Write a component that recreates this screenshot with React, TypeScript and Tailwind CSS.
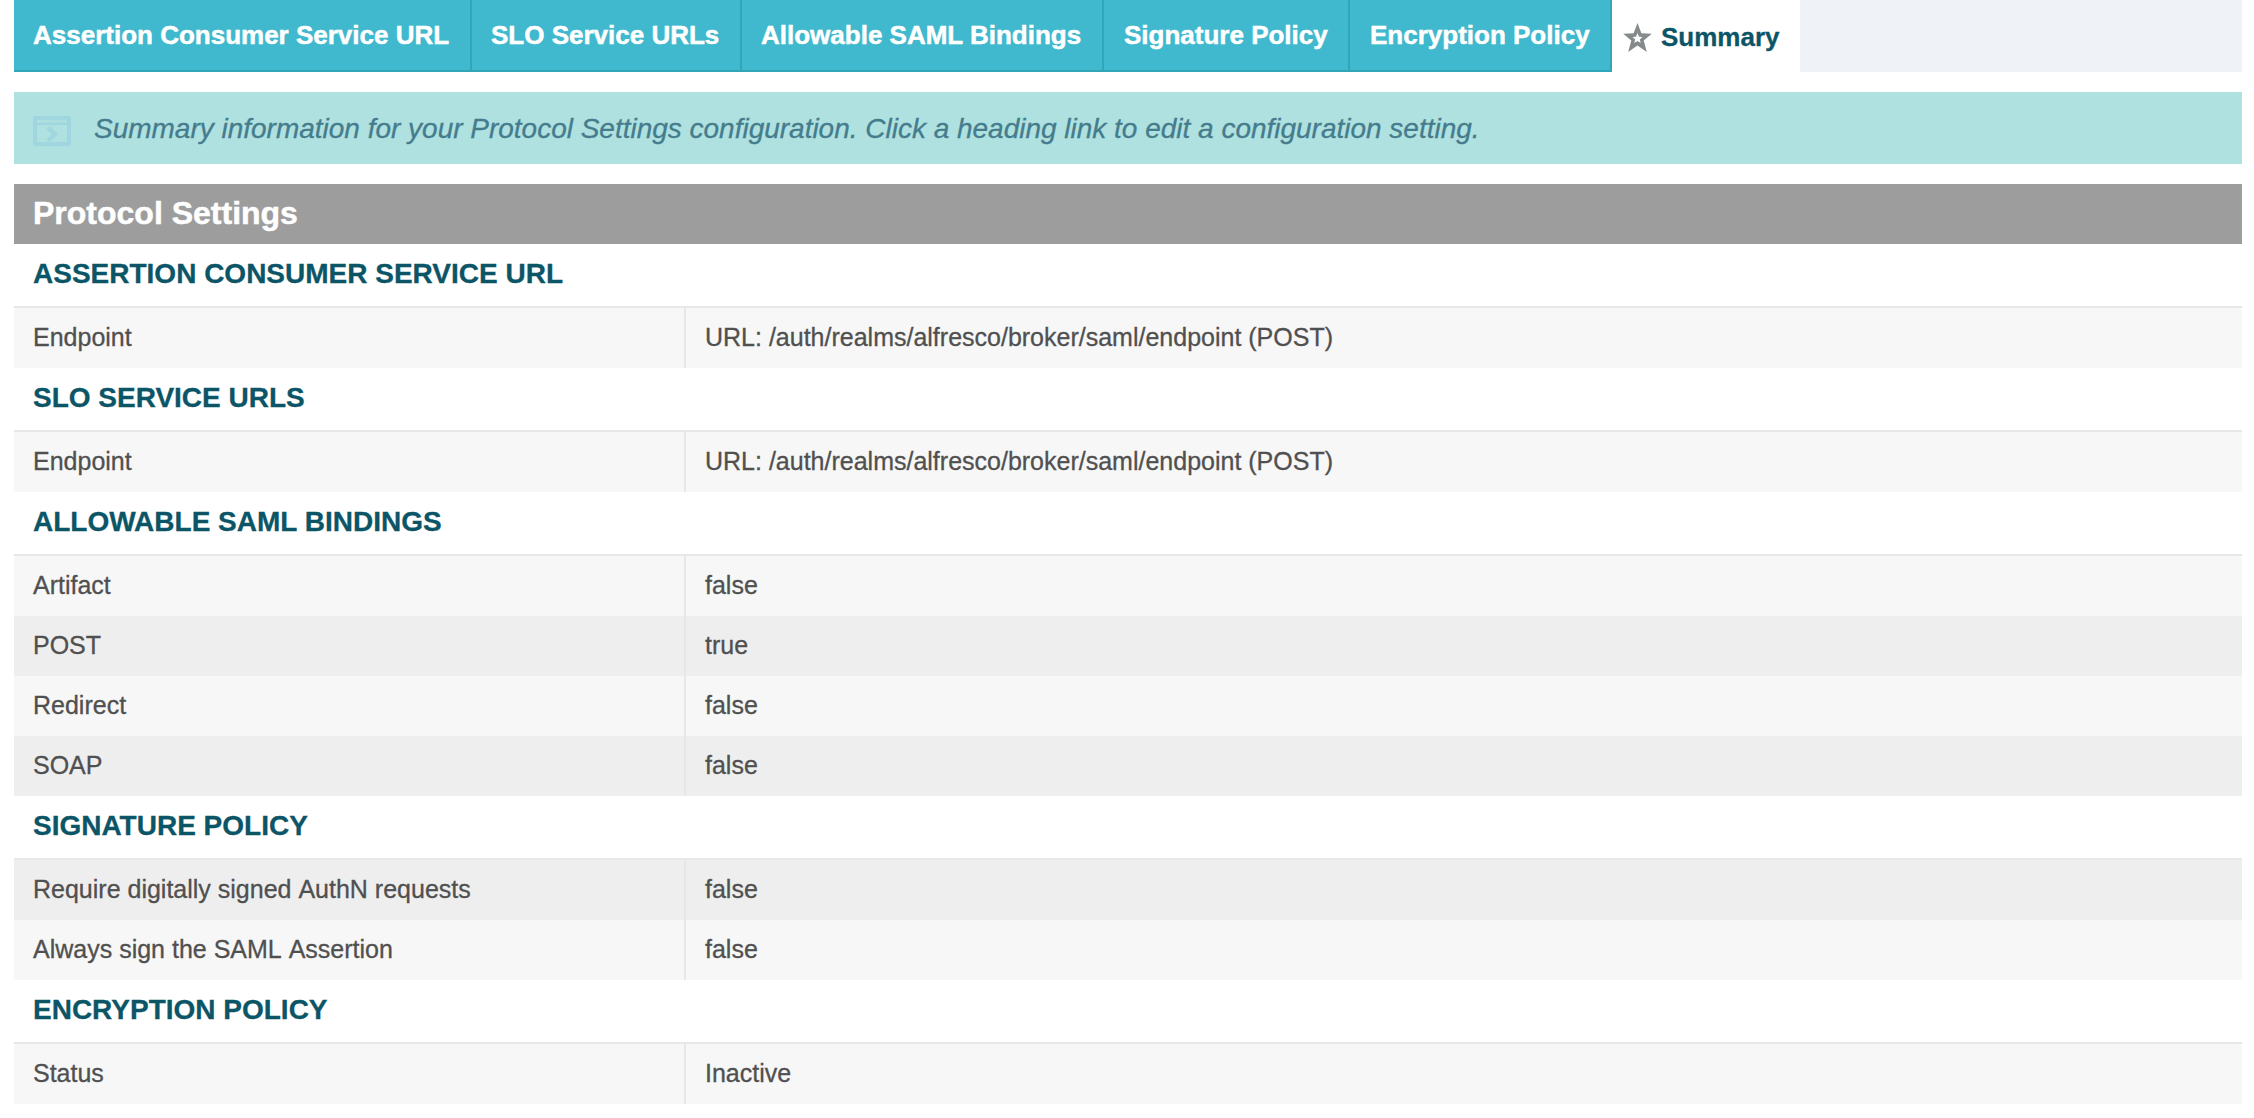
const tabs = [
  { label: 'Assertion Consumer Service URL', width: 'w-[458px]', pad: 'pl-[19px]' },
  { label: 'SLO Service URLs', width: 'w-[270px]', pad: 'pl-[19px]' },
  { label: 'Allowable SAML Bindings', width: 'w-[362px]', pad: 'pl-[19px]' },
  { label: 'Signature Policy', width: 'w-[246px]', pad: 'pl-5' },
  { label: 'Encryption Policy', width: 'w-[262px]', pad: 'pl-5' },
];

type Row = { name: string; value: string; dark?: boolean };

const sections: { title: string; rows: Row[] }[] = [
  {
    title: 'ASSERTION CONSUMER SERVICE URL',
    rows: [{ name: 'Endpoint', value: 'URL: /auth/realms/alfresco/broker/saml/endpoint (POST)' }],
  },
  {
    title: 'SLO SERVICE URLS',
    rows: [{ name: 'Endpoint', value: 'URL: /auth/realms/alfresco/broker/saml/endpoint (POST)' }],
  },
  {
    title: 'ALLOWABLE SAML BINDINGS',
    rows: [
      { name: 'Artifact', value: 'false' },
      { name: 'POST', value: 'true', dark: true },
      { name: 'Redirect', value: 'false' },
      { name: 'SOAP', value: 'false', dark: true },
    ],
  },
  {
    title: 'SIGNATURE POLICY',
    rows: [
      { name: 'Require digitally signed AuthN requests', value: 'false', dark: true },
      { name: 'Always sign the SAML Assertion', value: 'false' },
    ],
  },
  { title: 'ENCRYPTION POLICY', rows: [{ name: 'Status', value: 'Inactive' }] },
];

function StarIcon() {
  return (
    <svg className="h-[30px] w-[29px]" viewBox="0 0 29 30">
      <path
        fillRule="evenodd"
        fill="#858b8b"
        d="M14.5 1L18.4 11.2L28.8 11.7L20.7 18.4L23.8 30L14.5 23.6L5.2 30L8.3 18.4L0.2 11.7L10.6 11.2Z M14.5 11L13 14.8L9.6 15.1L12.2 17.4L11.3 21L14.5 19L17.7 21L16.8 17.4L19.4 15.1L16 14.8Z"
      />
    </svg>
  );
}

function WindowIcon() {
  return (
    <svg className="mt-[6px] h-[30px] w-[38px]" viewBox="0 0 38 30" fill="none">
      <rect x="2" y="2" width="34" height="26" rx="0.5" stroke="#9fd6df" strokeWidth="4" />
      <path d="M3 7.8H35" stroke="#9fd6df" strokeWidth="2.4" />
      <path d="M4 5H6M7.5 5H9.5M12 5H34" stroke="#abdfe0" strokeWidth="2.4" />
      <path d="M15 11.5L22 18L15 24.8" stroke="#9fd6df" strokeWidth="4.2" />
    </svg>
  );
}

export default function App() {
  return (
    <div className="h-[1118px] w-[2254px] overflow-hidden bg-white pr-3 pl-3.5 font-['Liberation_Sans',Arial,sans-serif] whitespace-nowrap">
      <nav className="flex h-[72px] bg-[#eff3f8]">
        {tabs.map((t) => (
          <div
            key={t.label}
            className={`${t.width} ${t.pad} h-full shrink-0 border-r-2 border-b-2 border-[#31a6b8] bg-[#40b8cd] pt-[15px] text-[26px] leading-[40px] font-bold text-white [-webkit-text-stroke:0.5px_white]`}
          >
            {t.label}
          </div>
        ))}
        <div className="flex h-full w-[188px] shrink-0 bg-white pt-[22px] pl-[11px]">
          <StarIcon />
          <span className="-mt-[5px] ml-[9px] text-[26px] leading-[40px] font-bold text-[#0b5567] [-webkit-text-stroke:0.3px_#0b5567]">
            Summary
          </span>
        </div>
      </nav>
      <div className="mt-5 flex h-[72px] bg-[#aee1df] pt-[18px] pl-[19px]">
        <WindowIcon />
        <p className="-mt-px ml-[23px] text-[28px] leading-[40px] tracking-[-0.01px] text-[#457c8d] italic [-webkit-text-stroke:0.3px_#457c8d]">
          Summary information for your Protocol Settings configuration. Click a heading link to edit a configuration setting.
        </p>
      </div>
      <h1 className="mt-5 h-[60px] bg-[#9d9d9d] pl-[19px] text-[32px] leading-[58px] font-bold text-white [-webkit-text-stroke:0.5px_white]">
        Protocol Settings
      </h1>
      {sections.map((s) => (
        <section key={s.title}>
          <h2 className="h-16 border-b-2 border-[#e7e7e7] pl-[19px] text-[28px] leading-[60px] font-bold text-[#0b5567] [-webkit-text-stroke:0.3px_#0b5567]">
            {s.title}
          </h2>
          {s.rows.map((r) => (
            <div
              key={r.name}
              className={`flex h-[60px] text-[25px] leading-[58px] text-[#505050] [-webkit-text-stroke:0.3px_#505050] ${r.dark ? 'bg-[#eeeeee]' : 'bg-[#f7f7f7]'}`}
            >
              <div className="w-[672px] shrink-0 border-r-2 border-[#e7e7e7] pl-[19px] [font-kerning:none]">{r.name}</div>
              <div className="pl-[19px]">{r.value}</div>
            </div>
          ))}
        </section>
      ))}
    </div>
  );
}
